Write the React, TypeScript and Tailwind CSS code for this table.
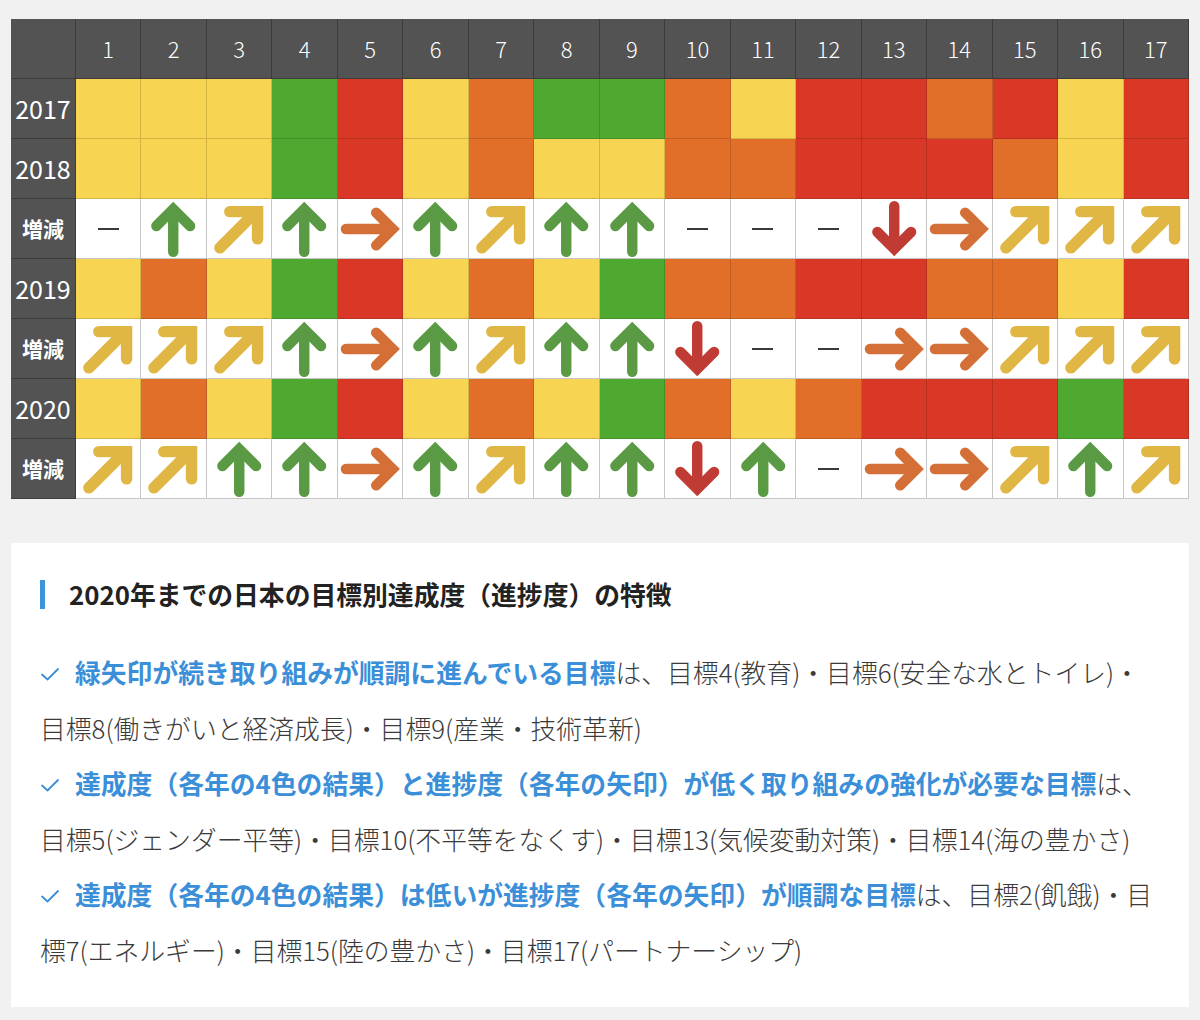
import React from "react";

type Level = "Y" | "G" | "R" | "O";
type Trend = "up" | "diag" | "right" | "down" | "flat";

const levelBg: Record<Level, string> = {
  Y: "bg-[#f7d452]",
  G: "bg-[#4fa82f]",
  R: "bg-[#d93826]",
  O: "bg-[#e16f29]",
};

const colorRows: Record<string, Level[]> = {
  "2017": ["Y", "Y", "Y", "G", "R", "Y", "O", "G", "G", "O", "Y", "R", "R", "O", "R", "Y", "R"],
  "2018": ["Y", "Y", "Y", "G", "R", "Y", "O", "Y", "Y", "O", "O", "R", "R", "R", "O", "Y", "R"],
  "2019": ["Y", "O", "Y", "G", "R", "Y", "O", "Y", "G", "O", "O", "R", "R", "O", "O", "Y", "R"],
  "2020": ["Y", "O", "Y", "G", "R", "Y", "O", "Y", "G", "O", "Y", "O", "R", "R", "R", "G", "R"],
};

const t1: Trend[] = ["flat", "up", "diag", "up", "right", "up", "diag", "up", "up", "flat", "flat", "flat", "down", "right", "diag", "diag", "diag"];
const t2: Trend[] = ["diag", "diag", "diag", "up", "right", "up", "diag", "up", "up", "down", "flat", "flat", "right", "right", "diag", "diag", "diag"];
const t3: Trend[] = ["diag", "diag", "up", "up", "right", "up", "diag", "up", "up", "down", "up", "flat", "right", "right", "diag", "up", "diag"];

const rows: ({ label: string; kind: "color"; cells: Level[] } | { label: string; kind: "trend"; cells: Trend[] })[] = [
  { label: "2017", kind: "color", cells: colorRows["2017"] },
  { label: "2018", kind: "color", cells: colorRows["2018"] },
  { label: "増減", kind: "trend", cells: t1 },
  { label: "2019", kind: "color", cells: colorRows["2019"] },
  { label: "増減", kind: "trend", cells: t2 },
  { label: "2020", kind: "color", cells: colorRows["2020"] },
  { label: "増減", kind: "trend", cells: t3 },
];

const TrendIcon = ({ t }: { t: Trend }) => {
  if (t === "flat") return <div className="w-[21px] h-[2px] bg-[#3a3a3a]" />;
  const common = { fill: "none", strokeLinecap: "round" as const, strokeLinejoin: "miter" as const };
  return (
    <svg width="65" height="60" viewBox="0 0 65 60">
      {t === "up" && (
        <g {...common} stroke="#5b9a44" strokeWidth="10.5">
          <path d="M32.5 53V12" />
          <path d="M15.5 27L32.5 10L49.5 27" />
        </g>
      )}
      {t === "down" && (
        <g {...common} stroke="#c03b33" strokeWidth="10.5">
          <path d="M32.5 7V48" />
          <path d="M15.5 33L32.5 50L49.5 33" />
        </g>
      )}
      {t === "right" && (
        <g {...common} stroke="#d46f37" strokeWidth="10.5">
          <path d="M8 30H52" />
          <path d="M38.5 13.5L55 30L38.5 46.5" />
        </g>
      )}
      {t === "diag" && (
        <g {...common} stroke="#e0b744" strokeWidth="11.5">
          <path d="M13 49L47 15" />
          <path d="M23 12.5H51V40" />
        </g>
      )}
    </svg>
  );
};

const Check = () => (
  <svg width="20" height="16" viewBox="0 0 20 16" className="inline-block mr-[15px] -mt-[4px] align-middle">
    <path d="M2 8.5L7.5 13.5L18 3" fill="none" stroke="#3b8fd8" strokeWidth="1.8" strokeLinecap="round" strokeLinejoin="round" />
  </svg>
);

const Blue = ({ children }: { children: React.ReactNode }) => (
  <span className="font-bold text-[#3b8fd8]">{children}</span>
);

export default function App() {
  return (
    <div className="min-h-screen bg-[#f1f1f1] pt-[19px] px-[11px] pb-[13px] font-['Noto_Sans_CJK_JP','Noto_Sans',sans-serif]">
      <div className="grid grid-cols-[65px_repeat(17,minmax(0,1fr))] auto-rows-[60px] w-[1178px]">
        <div className="bg-[#535353] border-r border-b border-[#3c3c3c]" />
        {Array.from({ length: 17 }, (_, i) => (
          <div
            key={i}
            className="bg-[#535353] border-r border-b border-[#3c3c3c] flex items-center justify-center text-white text-[22px] font-light"
          >
            {i + 1}
          </div>
        ))}
        {rows.map((row, r) => (
          <React.Fragment key={r}>
            <div
              className={
                row.kind === "color"
                  ? "bg-[#535353] border-r border-b border-[#3c3c3c] flex items-center justify-center text-white text-[25px]"
                  : "bg-[#535353] border-r border-b border-[#3c3c3c] flex items-center justify-center text-white text-[21px] font-bold"
              }
            >
              {row.label}
            </div>
            {row.kind === "color"
              ? row.cells.map((c, i) => (
                  <div key={i} className={`${levelBg[c]} border-r border-b border-black/15`} />
                ))
              : row.cells.map((c, i) => (
                  <div key={i} className="bg-white border-r border-b border-[#c6c6c6] flex items-center justify-center">
                    <TrendIcon t={c} />
                  </div>
                ))}
          </React.Fragment>
        ))}
      </div>

      <div className="mt-[44px] w-[1178px] bg-white pt-[35px] pl-[29px] pr-[28px] pb-[29px]">
        <div className="flex items-center h-[32px]">
          <div className="w-[5px] h-[29px] bg-[#3b94dc] mr-[24px]" />
          <h2 className="text-[25.8px] font-bold text-[#222]">2020年までの日本の目標別達成度（進捗度）の特徴</h2>
        </div>
        <div className="mt-[34px] text-[25.8px] leading-[55.6px] text-[#3a3a3a] font-light">
          <p>
            <Check />
            <Blue>緑矢印が続き取り組みが順調に進んでいる目標</Blue>は、目標4(教育)・目標6(安全な水とトイレ)・目標8(働きがいと経済成長)・目標9(産業・技術革新)
          </p>
          <p>
            <Check />
            <Blue>達成度（各年の4色の結果）と進捗度（各年の矢印）が低く取り組みの強化が必要な目標</Blue>は、目標5(ジェンダー平等)・目標10(不平等をなくす)・目標13(気候変動対策)・目標14(海の豊かさ)
          </p>
          <p>
            <Check />
            <Blue>達成度（各年の4色の結果）は低いが進捗度（各年の矢印）が順調な目標</Blue>は、目標2(飢餓)・目標7(エネルギー)・目標15(陸の豊かさ)・目標17(パートナーシップ)
          </p>
        </div>
      </div>
    </div>
  );
}
